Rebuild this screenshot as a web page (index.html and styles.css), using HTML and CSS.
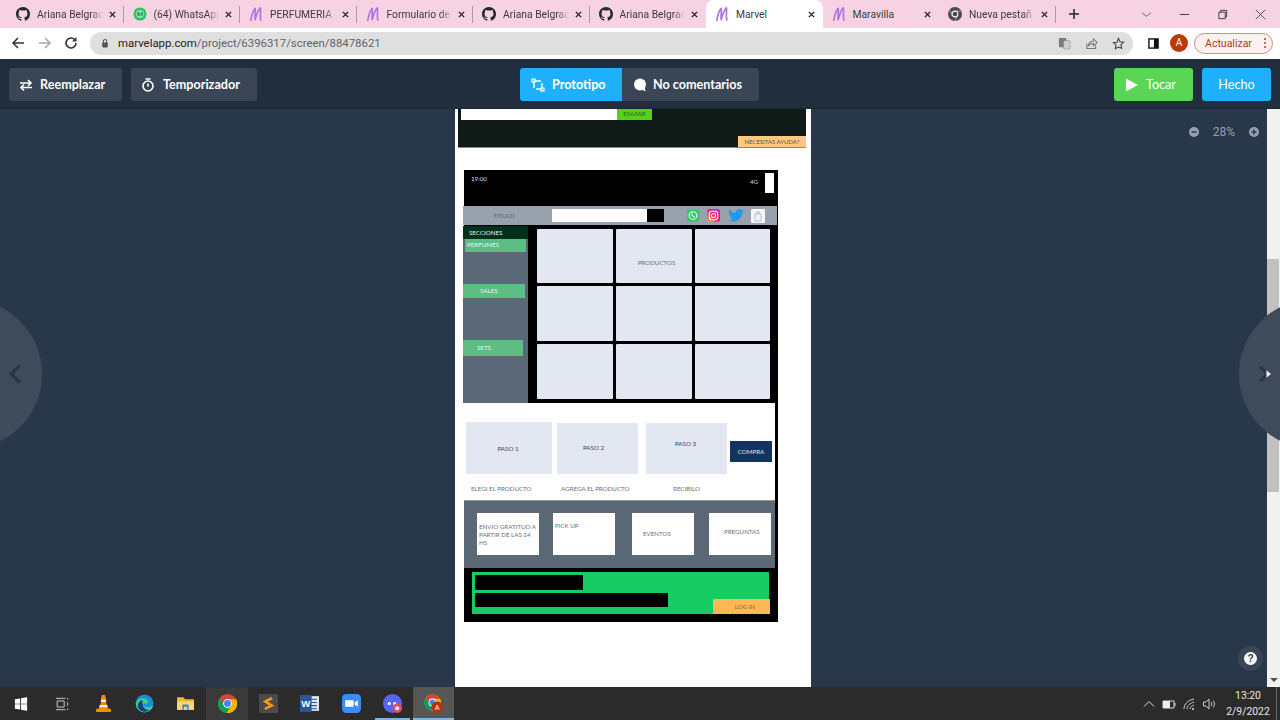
FILE: index.html
```html
<!DOCTYPE html>
<html lang="es">
<head>
<meta charset="utf-8">
<title>Marvel</title>
<link rel="stylesheet" href="styles.css">
</head>
<body>
<svg class="defs" width="0" height="0">
  <symbol id="gh" viewBox="0 0 16 16"><path fill="#24292f" d="M8 0C3.58 0 0 3.58 0 8c0 3.54 2.29 6.53 5.47 7.59.4.07.55-.17.55-.38 0-.19-.01-.82-.01-1.49-2.01.37-2.53-.49-2.69-.94-.09-.23-.48-.94-.82-1.13-.28-.15-.68-.52-.01-.53.63-.01 1.08.58 1.23.82.72 1.21 1.87.87 2.33.66.07-.52.28-.87.51-1.07-1.78-.2-3.64-.89-3.64-3.95 0-.87.31-1.59.82-2.15-.08-.2-.36-1.02.08-2.12 0 0 .67-.21 2.2.82.64-.18 1.32-.27 2-.27.68 0 1.36.09 2 .27 1.53-1.04 2.2-.82 2.2-.82.44 1.1.16 1.92.08 2.12.51.56.82 1.27.82 2.15 0 3.07-1.87 3.75-3.65 3.95.29.25.54.73.54 1.48 0 1.07-.01 1.93-.01 2.2 0 .21.15.46.55.38A8.013 8.013 0 0016 8c0-4.42-3.58-8-8-8z"/></symbol>
  <symbol id="mv" viewBox="0 0 16 16"><path fill="none" stroke="#ad74e6" stroke-width="1.900" stroke-linecap="round" stroke-linejoin="round" d="M2 15.500C3 9.500 4.500 4 7 1.500 7.800 5 6.500 10 7 14.500 8.500 9 10.500 3.500 13 1c.8 4-.7 9 .5 14"/></symbol>
  <symbol id="x" viewBox="0 0 8 8"><path stroke="#222" stroke-width="1.600" d="M1 1l6 6M7 1L1 7"/></symbol>
  <symbol id="cr" viewBox="0 0 16 16"><circle cx="8" cy="8" r="8" fill="#db4437"/><path fill="#f4b400" d="M8 4.500h7.300A8 8 0 0 1 7 16l3.900-6.300A3.500 3.500 0 0 0 8 4.500z"/><path fill="#0f9d58" d="M1.600 3.200l3.700 6.600A3.500 3.500 0 0 0 10 11l-3 5A8 8 0 0 1 1.600 3.200z"/><circle cx="8" cy="8" r="3.700" fill="#fff"/><circle cx="8" cy="8" r="2.900" fill="#4285f4"/></symbol>
</svg>

<header class="tabstrip">
  <div class="tab"><svg class="ticon"><use href="#gh"/></svg><span class="ttitle">Ariana Belgrac</span><svg class="tx"><use href="#x"/></svg></div>
  <div class="tab"><svg class="ticon" viewBox="0 0 16 16"><circle cx="8" cy="8" r="7.500" fill="#27c763"/><circle cx="8" cy="8" r="4.600" fill="#8fe0a8"/><text x="8" y="10.300" text-anchor="middle" class="wbadge">64</text></svg><span class="ttitle">(64) WhatsApp</span><svg class="tx"><use href="#x"/></svg></div>
  <div class="tab"><svg class="ticon"><use href="#mv"/></svg><span class="ttitle">PERFUMERIA -</span><svg class="tx"><use href="#x"/></svg></div>
  <div class="tab"><svg class="ticon"><use href="#mv"/></svg><span class="ttitle">Formulario de</span><svg class="tx"><use href="#x"/></svg></div>
  <div class="tab"><svg class="ticon"><use href="#gh"/></svg><span class="ttitle">Ariana Belgrac</span><svg class="tx"><use href="#x"/></svg></div>
  <div class="tab before-active"><svg class="ticon"><use href="#gh"/></svg><span class="ttitle">Ariana Belgrac</span><svg class="tx"><use href="#x"/></svg></div>
  <div class="tab active"><svg class="ticon"><use href="#mv"/></svg><span class="ttitle">Marvel</span><svg class="tx"><use href="#x"/></svg></div>
  <div class="tab"><svg class="ticon"><use href="#mv"/></svg><span class="ttitle">Maravilla</span><svg class="tx"><use href="#x"/></svg></div>
  <div class="tab"><svg class="ticon" viewBox="0 0 16 16"><circle cx="8" cy="8" r="8" fill="#4a4a4a"/><path fill="none" stroke="#9a9a9a" stroke-width="1.200" d="M8 4.500h7M5 10L1.800 3.500M11 10l-3.500 6"/><circle cx="8" cy="8" r="3.900" fill="#f3f3f3"/><circle cx="8" cy="8" r="2.700" fill="#4a4a4a"/></svg><span class="ttitle">Nueva pestañ</span><svg class="tx"><use href="#x"/></svg></div>
  <svg class="newtab" viewBox="0 0 12 12"><path stroke="#222" stroke-width="1.800" d="M6 0v12M0 6h12"/></svg>
  <div class="winctl">
    <svg class="wbtn" viewBox="0 0 12 12"><path fill="none" stroke="#666" d="M1 4l5 4 5-4"/></svg>
    <svg class="wbtn" viewBox="0 0 12 12"><path stroke="#333" d="M1 6h10"/></svg>
    <svg class="wbtn" viewBox="0 0 12 12"><path fill="none" stroke="#333" d="M2 3.500h7v7H2zM4 3.500V1.500h6.500v7H9"/></svg>
    <svg class="wbtn" viewBox="0 0 12 12"><path stroke="#444" d="M1 1l10 10M11 1L1 11"/></svg>
  </div>
</header>

<nav class="toolbar">
  <svg class="navic" viewBox="0 0 14 14"><path fill="none" stroke="#333" stroke-width="1.500" d="M13 7H2M7 2L2 7l5 5"/></svg>
  <svg class="navic" viewBox="0 0 14 14"><path fill="none" stroke="#a8a8a8" stroke-width="1.500" d="M1 7h11M7 2l5 5-5 5"/></svg>
  <svg class="navic" viewBox="0 0 14 14"><path fill="none" stroke="#333" stroke-width="1.600" d="M12 7a5 5 0 1 1-1.500-3.600"/><path fill="#333" d="M12.500 1v4.500H8z"/></svg>
  <div class="omnibox">
    <svg class="lock" viewBox="0 0 10 12"><path fill="none" stroke="#555" stroke-width="1.300" d="M3 6V3.500a2 2 0 0 1 4 0V6"/><rect x="1.500" y="5.500" width="7" height="6" rx="1" fill="#555"/></svg>
    <span class="url"><b>marvelapp.com</b>/project/6396317/screen/88478621</span>
    <div class="omni-right">
      <svg class="oic" viewBox="0 0 14 14"><rect x="1" y="1" width="8" height="10" rx="1" fill="#7d7d7d"/><rect x="6" y="4" width="7" height="9" rx="1" fill="#cfcfcf" stroke="#8a8a8a" stroke-width=".6"/></svg>
      <svg class="oic" viewBox="0 0 14 14"><path fill="none" stroke="#777" stroke-width="1.100" d="M2 7v5.500h9.500V9M3.500 9.500C4 6.500 6 4.500 9 4.500V2l4 3.800-4 3.700V7C7 7 5 8 3.500 9.500z"/></svg>
      <svg class="oic" viewBox="0 0 14 14"><path fill="none" stroke="#444" stroke-width="1.200" d="M7 1.500l1.700 3.600 3.800.5-2.800 2.700.7 3.900L7 10.800l-3.400 1.900.7-3.900-2.800-2.700 3.800-.5z"/></svg>
    </div>
  </div>
  <svg class="sidepanel" viewBox="0 0 12 12"><rect x="1" y="1" width="10" height="10" fill="#fff" stroke="#111" stroke-width="1.500"/><rect x="6.500" y="1" width="4.500" height="10" fill="#111"/></svg>
  <span class="avatar">A</span>
  <div class="update"><span>Actualizar</span><i class="dots"></i></div>
</nav>

<section class="marvelbar">
  <div class="mgroup">
    <button class="mbtn slate swap"><svg class="mic" viewBox="0 0 14 14"><path fill="none" stroke="#fff" stroke-width="1.600" d="M1 5h11M9 2l3 3-3 3M13 9.500H2M5 6.500l-3 3 3 3"/></svg>Reemplazar</button>
    <button class="mbtn slate timer"><svg class="mic" viewBox="0 0 14 14"><circle cx="7" cy="8" r="5" fill="none" stroke="#fff" stroke-width="1.600"/><path stroke="#fff" stroke-width="1.600" d="M4.500 1h5M7 5.500V8.500"/></svg>Temporizador</button>
  </div>
  <div class="mcenter">
    <button class="mbtn seg blue"><svg class="mic" viewBox="0 0 14 14"><path fill="none" stroke="#fff" stroke-width="1.400" d="M3 3h7M3 3v7M11 11H5M11 5v5"/><rect x="1" y="1" width="3" height="3" fill="none" stroke="#fff" stroke-width="1.200"/><rect x="10" y="10" width="3" height="3" fill="none" stroke="#fff" stroke-width="1.200"/></svg>Prototipo</button>
    <button class="mbtn seg slate2"><svg class="mic" viewBox="0 0 14 14"><circle cx="7" cy="6.500" r="6" fill="#fff"/><path fill="#fff" d="M8 11l4.500 2.500-1-5z"/></svg>No comentarios</button>
  </div>
  <div class="mright">
    <button class="mbtn green"><svg class="mic play" viewBox="0 0 14 14"><path fill="#fff" d="M1 0l13 7-13 7z"/></svg>Tocar</button>
    <button class="mbtn blue done">Hecho</button>
  </div>
</section>

<main class="main">
  <div class="stage">
    <article class="page">
      <div class="topblock">
        <div class="subscribe"><span class="sub-input"></span><span class="sub-btn">ENVIAR</span></div>
        <span class="help-tag">NECESITAS AYUDA?</span>
      </div>

      <div class="phone">
        <div class="status"><span class="time">19:00</span><span class="net">4G</span><span class="batt"></span></div>
        <div class="titlebar">
          <span class="tt">TITULO</span>
          <span class="search"></span><span class="searchbtn"></span>
          <svg class="soc wa" viewBox="0 0 14 14"><rect width="14" height="14" rx="2" fill="#2ecc63"/><circle cx="7" cy="7" r="4.500" fill="none" stroke="#fff" stroke-width="1.200"/><path stroke="#fff" stroke-width="1.500" stroke-linecap="round" d="M5.500 5.500c.3 1.500 1.500 2.800 3 3.200"/></svg>
          <svg class="soc ig" viewBox="0 0 14 14"><defs><linearGradient id="igg" x1="0" y1="1" x2="1" y2="0"><stop offset="0" stop-color="#fdb030"/><stop offset=".5" stop-color="#e8206f"/><stop offset="1" stop-color="#a030d8"/></linearGradient></defs><rect width="14" height="14" rx="3" fill="url(#igg)"/><rect x="2.500" y="2.500" width="9" height="9" rx="2.500" fill="none" stroke="#fff" stroke-width="1.100"/><circle cx="7" cy="7" r="2.200" fill="none" stroke="#fff" stroke-width="1.100"/></svg>
          <svg class="soc tw" viewBox="0 0 24 20"><path fill="#1d9bf0" d="M24 2.400c-.9.400-1.800.7-2.800.8 1-.6 1.800-1.600 2.200-2.700-1 .6-2 1-3.100 1.200A4.900 4.900 0 0 0 11.900 6.200C7.800 6 4.200 4 1.700.9a4.900 4.900 0 0 0 1.500 6.600c-.8 0-1.600-.2-2.200-.6 0 2.400 1.700 4.400 3.900 4.900-.7.200-1.500.2-2.200.1.600 2 2.400 3.400 4.600 3.400A9.900 9.900 0 0 1 0 17.300 14 14 0 0 0 7.500 19.500c9.100 0 14.300-7.700 14-14.600 1-.7 1.800-1.600 2.500-2.500z"/></svg>
          <svg class="soc bag" viewBox="0 0 14 14"><rect width="14" height="14" rx="1" fill="#f4f5f7"/><path fill="none" stroke="#b9bec6" d="M4 5h6v7H4zM5.500 5V3h3v2"/></svg>
        </div>
        <div class="shop">
          <aside class="side">
            <div class="side-title">SECCIONES</div>
            <div class="side-item perf">PERFUMES</div>
            <div class="side-item sales">SALES</div>
            <div class="side-item sets">SETS</div>
          </aside>
          <div class="products">
            <div class="prod"></div><div class="prod">PRODUCTOS</div><div class="prod"></div>
            <div class="prod"></div><div class="prod"></div><div class="prod"></div>
            <div class="prod"></div><div class="prod"></div><div class="prod"></div>
          </div>
        </div>
        <div class="steps">
          <div class="step s1"><div class="step-box">PASO 1</div><p class="step-label">ELEGI EL PRODUCTO</p></div>
          <div class="step s2"><div class="step-box">PASO 2</div><p class="step-label">AGREGA EL PRODUCTO</p></div>
          <div class="step s3"><div class="step-box">PASO 3</div><p class="step-label">RECIBILO</p></div>
          <div class="buy">COMPRA</div>
        </div>
        <div class="infos">
          <div class="info i1">ENVIO GRATITUO A PARTIR DE LAS 24 HS</div>
          <div class="info i2">PICK UP</div>
          <div class="info i3">EVENTOS</div>
          <div class="info i4">PREGUNTAS</div>
        </div>
        <div class="login">
          <span class="bar b1"></span>
          <span class="bar b2"></span>
          <span class="login-btn">LOG IN</span>
        </div>
      </div>
    </article>
  </div>
  <div class="scrollbar"><div class="thumb"></div><i class="down"></i></div>

  <div class="zoomctl">
    <svg class="zic" viewBox="0 0 10 10"><circle cx="5" cy="5" r="5" fill="#94a0b0"/><path stroke="#28384a" stroke-width="1.500" d="M2.500 5h5"/></svg>
    <span>28%</span>
    <svg class="zic" viewBox="0 0 10 10"><circle cx="5" cy="5" r="5" fill="#94a0b0"/><path stroke="#28384a" stroke-width="1.500" d="M2.500 5h5M5 2.500v5"/></svg>
  </div>
  <div class="pager prev"><svg class="chev" viewBox="0 0 12 18"><path fill="none" stroke="#2a3646" stroke-width="3" stroke-linecap="round" d="M10 2L3 9l7 7"/></svg></div>
  <div class="pager next"><svg class="chev" viewBox="0 0 14 18"><path fill="none" stroke="#2a3646" stroke-width="3" stroke-linecap="round" d="M2 2l7 7-7 7"/><path fill="#eee" d="M8 5l5 4-5 4z"/></svg></div>
  <div class="helpbtn"><span>?</span></div>
</main>

<footer class="taskbar">
  <div class="task"><svg class="tk" viewBox="0 0 16 16"><path fill="#fff" d="M1 2.500l6-.9v6H1zM8 1.400L15 .4v7.200H8zM1 8.400h6v6l-6-.9zM8 8.400h7v7.200l-7-1z"/></svg></div>
  <div class="task"><svg class="tk" viewBox="0 0 16 16"><path fill="none" stroke="#ddd" d="M2.500 4.500h8v7h-8zM1 1.500h11M1 14.500h11M14.500 1v2M14.500 6v4M14.500 13v2"/></svg></div>
  <div class="task"><svg class="tk big" viewBox="0 0 18 18"><path fill="#f58a07" d="M7.500 1h3l1 4-.5 2 2.500 7h2.500v3H2v-3h2.500L7 7 6.500 5z"/><path fill="#eee" d="M6.800 5.500h4.400l.6 2H6.300zM5.500 10.500h7l.6 2H4.900z"/></svg></div>
  <div class="task"><svg class="tk big" viewBox="0 0 18 18"><circle cx="9" cy="9" r="8.500" fill="#1a8fd6"/><path fill="#3ecf8e" d="M1 9c1-5 7-6 10-4 2 1 2 4 0 4H7c0 3 5 5 10 2-1 5-6 7-10 6C3 16 1 13 1 9z"/><path fill="#10417a" d="M7 9c0 3 3 7 7 6-3 3-9 2-11-2-1-3 1-7 4-7z"/></svg></div>
  <div class="task"><svg class="tk big" viewBox="0 0 18 18"><path fill="#e9b93d" d="M1 3h6l1.500 2H17v10H1z"/><path fill="#f8d775" d="M1 7h16v8H1z"/><path fill="#3a8bc4" d="M6 10h6v5h-1.500v-3h-3v3H6z"/></svg></div>
  <div class="task lit"><svg class="tk big"><use href="#cr"/></svg></div>
  <div class="task"><svg class="tk big" viewBox="0 0 18 18"><rect width="18" height="18" rx="1" fill="#4b4b4b"/><path fill="none" stroke="#f79a1e" stroke-width="2.400" d="M12.500 4L6 7l6 4-6.500 3"/></svg></div>
  <div class="task"><svg class="tk big" viewBox="0 0 18 18"><rect x="5" y="2" width="13" height="14" fill="#dfe6f0"/><path stroke="#2b579a" d="M10 5h6M10 8h6M10 11h6M10 14h6"/><rect y="1" width="11" height="16" fill="#2b579a"/><text x="5.500" y="12" text-anchor="middle" class="wletter">W</text></svg></div>
  <div class="task"><svg class="tk big" viewBox="0 0 18 18"><rect width="18" height="18" rx="4" fill="#3b8cf3"/><path fill="#fff" d="M3 6h8v6H3zM12 8l3-2v6l-3-2z"/></svg></div>
  <div class="task"><svg class="tk big" viewBox="0 0 18 18"><circle cx="9" cy="9" r="9" fill="#5865f2"/><circle cx="6" cy="9" r="1.500" fill="#fff"/><circle cx="11" cy="9" r="1.500" fill="#fff"/><circle cx="13.500" cy="13.500" r="4.500" fill="#e0505a"/><circle cx="13.500" cy="13.500" r="1.800" fill="#fff"/></svg></div>
  <div class="task on"><svg class="tk big" viewBox="0 0 18 18"><use href="#cr" width="16" height="16"/><circle cx="12.500" cy="12.500" r="5.500" fill="#b5320f"/><text x="12.500" y="15" text-anchor="middle" class="aletter">A</text></svg></div>
  <div class="tray">
    <svg class="tray-ic" viewBox="0 0 14 14"><path fill="none" stroke="#ddd" d="M2 9.500L7 4.500l5 5"/></svg>
    <svg class="tray-ic" viewBox="0 0 14 14"><path fill="none" stroke="#ddd" d="M1 4h11v7H1z"/><rect x="1" y="4" width="7" height="7" fill="#eee"/><path stroke="#ddd" d="M13 6v3"/></svg>
    <svg class="tray-ic" viewBox="0 0 14 14"><path fill="none" stroke="#ccc" d="M2 12c0-5 4-9 10-10M5 12c0-3 3-6 7-7M8 12c0-2 2-3 4-4"/><circle cx="11" cy="12" r="1" fill="#ddd"/></svg>
    <svg class="tray-ic" viewBox="0 0 14 14"><path fill="none" stroke="#ccc" d="M1.500 5h2.500l3-3v10l-3-3H1.500zM9 5c1 1 1 3 0 4M11 3.500c2 2 2 5 0 7"/></svg>
    <div class="clock"><span>13:20</span><span>2/9/2022</span></div>
  </div>
</footer>
</body>
</html>
```
FILE: styles.css
```css
* { box-sizing: border-box; }
html, body { margin: 0; height: 100%; }
body {
  width: 1280px; height: 720px; overflow: hidden;
  display: flex; flex-direction: column;
  font-family: "Roboto", "Liberation Sans", sans-serif;
  background: #28384a;
}
.defs { position: absolute; }
svg { display: block; flex: none; }

/* Tab strip */
.tabstrip {
  height: 28px; flex: none; display: flex; align-items: center;
  background: #f6d2e3; padding-left: 7px;
}
.tab {
  width: 116.5px; height: 28px; flex: none; display: flex; align-items: center;
  padding: 0 8px 0 9px; position: relative;
}
.tab::after {
  content: ""; position: absolute; right: 0; top: 6px; width: 1px; height: 17px; background: #a99aa3;
}
.before-active::after, .active::after, .tab:nth-child(8)::after { display: none; }
.active { background: #fff; border-radius: 8px 8px 0 0; }
.ticon { width: 14px; height: 14px; margin-right: 7px; }
.ttitle {
  flex: 1; min-width: 0; white-space: nowrap;
  font-size: 10.3px; color: #3b3b3b;
  -webkit-mask-image: linear-gradient(90deg, #000 82%, transparent 100%);
  mask-image: linear-gradient(90deg, #000 82%, transparent 100%);
}
.active .ttitle, .tab:nth-child(8) .ttitle { -webkit-mask-image: none; mask-image: none; }
.tx { width: 7px; height: 7px; margin-left: 6px; }
.wbadge { font: 700 6px "Roboto", sans-serif; fill: #0e7a38; }
.newtab { width: 10px; height: 10px; margin-left: 13px; }
.winctl { margin-left: auto; display: flex; align-items: center; gap: 27px; padding-right: 14px; }
.wbtn { width: 11px; height: 11px; }

/* Toolbar */
.toolbar {
  height: 31px; flex: none; display: flex; align-items: center;
  background: #fff; padding: 1px 7px 2px 11px;
}
.navic { width: 14px; height: 14px; margin-right: 12.5px; }
.omnibox {
  width: 1044px; height: 23px; margin-left: -0.5px; display: flex; align-items: center;
  background: #dfdfdf; border-radius: 12px; padding: 0 8px 0 11px;
}
.lock { width: 8px; height: 10px; margin-right: 9px; }
.url { font-size: 11.4px; color: #5f6368; white-space: nowrap; }
.url b { font-weight: 400; color: #222; }
.omni-right { margin-left: auto; display: flex; align-items: center; gap: 14px; }
.oic { width: 13px; height: 13px; }
.sidepanel { width: 11px; height: 11px; margin-left: 15px; }
.avatar {
  width: 18px; height: 18px; margin-left: 11px; border-radius: 50%;
  background: #b93a0c; color: #fff; font-size: 10px; text-align: center; line-height: 18px;
}
.update {
  width: 79px; height: 21px; margin-left: 6px; display: flex; align-items: center;
  padding: 0 6px 0 10px; border: 1px solid #d88a80; border-radius: 11px;
  background: #fdf1ef; color: #a8381f; font-size: 10.5px;
}
.dots {
  width: 2px; height: 2px; margin-left: auto; background: #b93a1c; border-radius: 50%;
  box-shadow: 0 -4px 0 #b93a1c, 0 4px 0 #b93a1c;
}

/* Marvel bar */
.marvelbar {
  height: 50px; flex: none; display: grid; grid-template-columns: 1fr auto 1fr;
  align-items: start; padding: 9px 9px 0; background: #212e3e;
  border-bottom: 1px solid #1b2633;
}
.mgroup { display: flex; gap: 9px; }
.mcenter { display: flex; margin-left: -1px; }
.mright { display: flex; gap: 9px; justify-content: flex-end; }
.mbtn {
  height: 33px; border: 0; border-radius: 3px;
  display: flex; align-items: center; gap: 7px; color: #fff;
  font: 700 12.6px "Lato", "Liberation Sans", sans-serif; white-space: nowrap;
}
.slate { background: #3a4656; }
.swap { width: 113px; padding: 0 0 0 10px; }
.timer { width: 126px; padding: 0 0 0 10px; gap: 8px; }
.slate2 { background: #3a4656; border-radius: 0 3px 3px 0; width: 137px; padding: 0 0 0 11px; gap: 6px; }
.blue { background: #1fb0fb; }
.green { background: #5bd555; width: 79px; padding: 0 0 0 11px; gap: 8px; font-weight: 400; }
.seg.blue { border-radius: 3px 0 0 3px; width: 102px; padding: 0 0 0 11px; }
.done { width: 69px; padding: 0; justify-content: center; font-weight: 400; }
.mic { width: 14px; height: 14px; }
.play { width: 13px; height: 14px; }

/* Main */
.main { flex: 1; min-height: 0; display: flex; position: relative; overflow: hidden; }
.stage { flex: 1; min-width: 0; display: flex; justify-content: center; background: #28384a; }
.page {
  width: 356px; height: 100%; margin-right: 1px; background: #fff; overflow: hidden;
  font-family: "Lato", "Liberation Sans", sans-serif;
}
.scrollbar { width: 13px; flex: none; background: #f1f1f1; padding-top: 150px; position: relative; }
.thumb { width: 11.5px; height: 233px; background: #c1c1c1; }
.down {
  position: absolute; left: 3px; bottom: 5px; width: 0; height: 0;
  border: 4px solid transparent; border-bottom: 0; border-top: 4px solid #505050;
}

.topblock { margin-left: 3px; width: 348px; height: 39px; background: #101a17; position: relative; border-bottom: 1px solid #7f8686; }
.subscribe { display: flex; padding-left: 3px; height: 11px; }
.sub-input { width: 156px; background: #fff; }
.sub-btn { width: 35px; background: #57cf1c; color: #256a10; font-size: 6.2px; line-height: 10px; text-align: center; }
.help-tag {
  position: absolute; right: 0; bottom: 0; width: 68px; height: 11px;
  background: #ffc880; color: #555; font-size: 6px; line-height: 11px; text-align: center; white-space: nowrap;
}

.phone { margin: 22px 0 0 9px; width: 314px; height: 452px; background: #000; font-size: 6.2px; color: #6a717b; }
.status { height: 36px; display: flex; align-items: flex-start; color: #ddd; }
.time { margin: 5px 0 0 7px; }
.net { margin: 8px 0 0 auto; }
.batt { width: 9px; height: 20px; margin: 3px 4px 0 7px; background: #fff; }

.titlebar {
  width: 314px; height: 19px; margin-left: -1px; background: #98a1ad;
  display: flex; align-items: center;
}
.tt { width: 89px; text-align: center; padding-right: 7px; white-space: nowrap; color: #59616c; }
.search { width: 95px; height: 13px; background: #fff; }
.searchbtn { width: 17px; height: 13px; background: #000; }
.soc { width: 12px; height: 13px; }
.wa { margin-left: 23px; }
.ig { margin-left: 8px; width: 13px; }
.tw { margin-left: 8px; width: 16px; }
.bag { margin-left: 7px; width: 14px; height: 14px; }

.shop { height: 177px; margin-top: 1px; display: flex; }
.side { width: 65px; margin-left: -1px; background: #5b6876; color: #e8f5ec; }
.side-title { height: 13px; background: #03301c; line-height: 13px; padding-left: 6px; }
.side-item { background: #5ebd85; }
.perf { width: 61px; height: 13px; margin-left: 2px; line-height: 12px; padding-left: 2px; }
.sales { width: 62px; height: 14px; margin-top: 32px; line-height: 14px; padding-left: 17px; }
.sets { width: 60px; height: 16px; margin-top: 42px; line-height: 16px; padding-left: 14px; }
.products {
  margin: 3px 0 0 9px; display: grid; grid-template-columns: 76px 76px 75px; grid-template-rows: 54px 55px 55px; gap: 3px;
}
.prod {
  background: #e3e7f1; border-radius: 1px; display: flex; align-items: center; justify-content: center;
  padding: 12px 0 0 5px;
}

.steps { width: 311px; height: 97px; background: #fff; display: flex; align-items: flex-start; }
.step { flex: none; }
.s1 { width: 86px; margin: 19px 0 0 2px; }
.s2 { width: 81px; margin: 20px 0 0 5px; }
.s3 { width: 81px; margin: 20px 0 0 8px; }
.step-box { background: #e3e7f1; height: 51px; display: flex; align-items: center; justify-content: center; color: #3d4550; }
.s1 .step-box { height: 52px; padding-right: 2px; }
.s2 .step-box { padding-bottom: 3px; padding-right: 8px; }
.s3 .step-box { padding: 0 2px 10px 0; }
.step-label { margin: 9px 0 0; line-height: 12px; white-space: nowrap; }
.s1 .step-label { margin-left: 5px; }
.s2 .step-label { margin-left: 4px; }
.s3 .step-label { margin-left: 27px; }
.buy {
  width: 42px; height: 21px; margin: 38px 0 0 3px; background: #12355f; color: #dfe6ee;
  text-align: center; line-height: 21px;
}

.infos { width: 311px; height: 68px; background: #5b6876; border-top: 1px solid #8f98a2; padding-top: 12px; display: flex; align-items: flex-start; }
.info { height: 42px; width: 62px; background: #fff; color: #6a717b; line-height: 8px; flex: none; }
.i1 { margin-left: 13px; padding: 10px 1px 0 2px; }
.i2 { margin-left: 14px; padding: 9px 0 0 2px; }
.i3 { margin-left: 17px; padding: 17px 0 0 11px; }
.i4 { margin-left: 15px; padding: 15px 0 0 15px; }

.login {
  width: 297px; height: 42px; margin: 4px 0 0 8px; background: #17cc63; padding: 3px 0 0 3px;
  position: relative;
}
.bar { display: block; background: #000; }
.b1 { width: 108px; height: 15px; }
.b2 { width: 193px; height: 14px; margin-top: 3px; }
.login-btn {
  position: absolute; right: -1px; bottom: 0; width: 57px; height: 15px; padding-left: 7px;
  background: #ffb851; color: #7a6a4c; text-align: center; line-height: 15px;
}

/* Overlays */
.zoomctl {
  position: absolute; top: 16px; left: 1189px; width: 70px; display: flex; align-items: center; justify-content: space-between;
  color: #94a0b0; font-size: 12px;
}
.zic { width: 10px; height: 10px; }
.pager {
  position: absolute; top: 190px; width: 150px; height: 150px; border-radius: 50%; background: #3f4a5b;
  display: flex; align-items: center;
}
.prev { left: -108px; justify-content: flex-end; padding-right: 21px; }
.next { left: 1239px; padding-left: 20px; }
.chev { width: 13px; height: 20px; }
.helpbtn {
  position: absolute; left: 1238px; top: 537px; width: 25px; height: 25px; border-radius: 50%; background: #3a4656;
  display: flex; align-items: center; justify-content: center;
}
.helpbtn span {
  width: 13px; height: 13px; border-radius: 50%; background: #fff; color: #28384a;
  font: 700 10px/13px "Liberation Sans", sans-serif; text-align: center;
}

/* Taskbar */
.taskbar { height: 33px; flex: none; display: flex; background: #2b2b2b; }
.task { width: 41.3px; height: 33px; flex: none; display: flex; align-items: center; justify-content: center; position: relative; }
.tk { width: 14px; height: 14px; }
.tk.big { width: 19px; height: 19px; }
.lit { background: #3a3a3a; }
.on { background: #565656; }
.task:nth-child(10)::after, .on::after {
  content: ""; position: absolute; bottom: 0; left: 3px; right: 3px; height: 2px; background: #7fb6e0;
}
.on::after { left: 0; right: 0; }
.wletter { font: 700 9px "Liberation Sans", sans-serif; fill: #fff; }
.aletter { font: 700 7px "Liberation Sans", sans-serif; fill: #f0c0b0; }
.tray { margin-left: auto; display: flex; align-items: center; gap: 6px; padding-right: 3px; }
.tray::after { content: ""; width: 1px; align-self: stretch; margin-left: -6px; background: #6a6a6a; }
.tray-ic { width: 14px; height: 14px; }
.clock {
  width: 56px; margin-left: -2px; display: flex; flex-direction: column; align-items: center; gap: 3px;
  color: #e6e6e6; font-size: 10.4px; line-height: 13px;
}
```
